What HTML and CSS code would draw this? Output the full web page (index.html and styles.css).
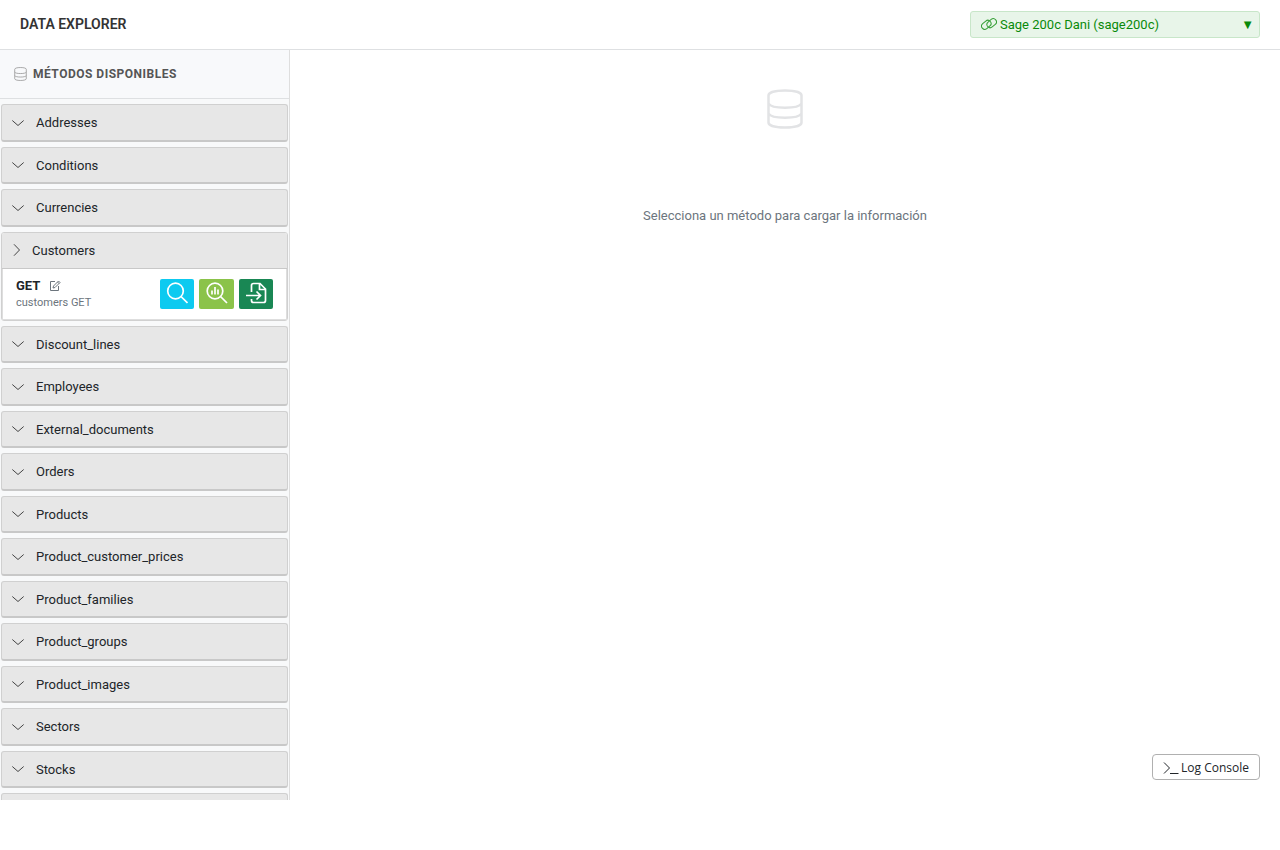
FILE: index.html
```html
<!DOCTYPE html>
<html lang="es">
<head>
<meta charset="utf-8">
<meta name="viewport" content="width=device-width, initial-scale=1">
<title>Data Explorer</title>
<link rel="stylesheet" href="styles.css">
</head>
<body>
<svg class="sprite" aria-hidden="true">
  <symbol id="db" viewBox="0 0 36 40"><path d="M1.500 6.500C1.500 3.500 8 1.500 18 1.500S34.500 3.500 34.500 6.500V33.500C34.500 36.500 28 38.500 18 38.500S1.500 36.500 1.500 33.500ZM1.500 14.500C3 17.300 9 18.700 18 18.700S33 17.300 34.500 14.500M1.500 24.500C3 27.300 9 28.700 18 28.700S33 27.300 34.500 24.500"/></symbol>
  <symbol id="down" viewBox="0 0 12 12"><path d="M.3 3.500 6 8.500 11.700 3.500"/></symbol>
  <symbol id="right" viewBox="0 0 12 12"><path d="M3 .3 8.500 6 3 11.700"/></symbol>
</svg>
<div class="app">
  <header class="topbar">
    <h1 class="topbar-title">DATA EXPLORER</h1>
    <div class="connection">
      <svg class="connection-icon" viewBox="0 0 16 14" aria-hidden="true"><rect x="-5.200" y="-3.200" width="10.400" height="6.400" rx="3.200" transform="translate(5.300 7.800) rotate(-40)"/><rect x="-5.200" y="-3.200" width="10.400" height="6.400" rx="3.200" transform="translate(10.700 6.200) rotate(-40)"/></svg>
      <select class="connection-select" aria-label="Conexión"><option>Sage 200c Dani (sage200c)</option></select>
      <span class="connection-arrow" aria-hidden="true">▼</span>
    </div>
  </header>
  <div class="body">
    <aside class="sidebar">
      <h2 class="sidebar-title"><svg class="sidebar-icon" aria-hidden="true"><use href="#db"/></svg>MÉTODOS DISPONIBLES</h2>
      <div class="methods">
        <button class="method" type="button"><svg class="chevron" aria-hidden="true"><use href="#down"/></svg>Addresses</button>
        <button class="method" type="button"><svg class="chevron" aria-hidden="true"><use href="#down"/></svg>Conditions</button>
        <button class="method" type="button"><svg class="chevron" aria-hidden="true"><use href="#down"/></svg>Currencies</button>
        <section class="group">
          <button class="method method-open" type="button" aria-expanded="true"><svg class="chevron" aria-hidden="true"><use href="#right"/></svg>Customers</button>
          <div class="endpoint">
            <div class="endpoint-info">
              <div class="endpoint-verb">GET
                <svg class="edit" viewBox="0 0 12 12" aria-hidden="true"><path d="M6 1.500H1.500V10.500H9.500V6M4 8 4.500 6 9.500 1 11 2.500 6 7.500ZM8.500 2 10 3.500"/></svg>
              </div>
              <div class="endpoint-path">customers GET</div>
            </div>
            <div class="actions">
              <button class="action action-view" type="button" aria-label="Ver"><svg class="action-icon" viewBox="0 0 22 22" aria-hidden="true"><circle cx="9.500" cy="9" r="7.800"/><path d="M15 14.500 21.500 21"/></svg></button>
              <button class="action action-analyze" type="button" aria-label="Analizar"><svg class="action-icon" viewBox="0 0 22 22" aria-hidden="true"><circle cx="9" cy="9" r="7.800"/><path d="M14.500 14.500 21 21M6 12.500V8.500M9 12.500V5M12 12.500V7.500"/></svg></button>
              <button class="action action-export" type="button" aria-label="Exportar"><svg class="action-icon" viewBox="0 0 22 22" aria-hidden="true"><path d="M6.500 10V3.500Q6.500 1.500 8.500 1.500H15L20.500 7V18.500Q20.500 20.500 18.500 20.500H8.500Q6.500 20.500 6.500 18.500V17M14.500 2V7.500H20M1 13.500H15.500M11.500 9.500 15.500 13.500 11.500 17.500"/></svg></button>
            </div>
          </div>
        </section>
        <button class="method" type="button"><svg class="chevron" aria-hidden="true"><use href="#down"/></svg>Discount_lines</button>
        <button class="method" type="button"><svg class="chevron" aria-hidden="true"><use href="#down"/></svg>Employees</button>
        <button class="method" type="button"><svg class="chevron" aria-hidden="true"><use href="#down"/></svg>External_documents</button>
        <button class="method" type="button"><svg class="chevron" aria-hidden="true"><use href="#down"/></svg>Orders</button>
        <button class="method" type="button"><svg class="chevron" aria-hidden="true"><use href="#down"/></svg>Products</button>
        <button class="method" type="button"><svg class="chevron" aria-hidden="true"><use href="#down"/></svg>Product_customer_prices</button>
        <button class="method" type="button"><svg class="chevron" aria-hidden="true"><use href="#down"/></svg>Product_families</button>
        <button class="method" type="button"><svg class="chevron" aria-hidden="true"><use href="#down"/></svg>Product_groups</button>
        <button class="method" type="button"><svg class="chevron" aria-hidden="true"><use href="#down"/></svg>Product_images</button>
        <button class="method" type="button"><svg class="chevron" aria-hidden="true"><use href="#down"/></svg>Sectors</button>
        <button class="method" type="button"><svg class="chevron" aria-hidden="true"><use href="#down"/></svg>Stocks</button>
        <button class="method" type="button" aria-label="Más métodos"><svg class="chevron" aria-hidden="true"><use href="#down"/></svg></button>
      </div>
    </aside>
    <main class="content">
      <svg class="empty-icon" aria-hidden="true"><use href="#db"/></svg>
      <p class="empty-text">Selecciona un método para cargar la información</p>
      <button class="console" type="button"><svg class="console-icon" viewBox="0 0 16 12" aria-hidden="true"><path d="M1 .5 6.500 6 1 11.500M7 11.500H15.500"/></svg>Log Console</button>
    </main>
  </div>
</div>
</body>
</html>
```
FILE: styles.css
```css
* { box-sizing: border-box; }
body {
  margin: 0;
  background: #fff;
  color: #212529;
  font: 13px/1.5 Roboto, "Liberation Sans", sans-serif;
}
button, select { font: inherit; color: inherit; }
svg { flex: none; fill: none; stroke: currentColor; }
.sprite { position: absolute; width: 0; height: 0; }
.app {
  display: flex;
  flex-direction: column;
  height: calc(100vh - 50px);
}
.topbar {
  display: flex;
  align-items: center;
  justify-content: space-between;
  flex: none;
  height: 50px;
  padding: 0 20px;
  border-bottom: 1px solid #dee0e2;
}
.topbar-title { margin: 0; font-size: 14px; font-weight: 600; color: #333; }
.connection { position: relative; width: 290px; color: #0a8a0a; }
.connection-select {
  display: block;
  width: 100%;
  height: 27px;
  padding: 0 29px;
  border: 1px solid #c8e6c9;
  border-radius: 3px;
  background: #e8f5e9;
  appearance: none;
}
.connection-icon {
  position: absolute;
  left: 11px;
  top: 6px;
  width: 16px;
  height: 14px;
  opacity: 0.8;
}
.connection-arrow { position: absolute; right: 6px; top: 4px; pointer-events: none; }
.body { display: flex; flex: 1; min-height: 0; }
.sidebar {
  display: flex;
  flex-direction: column;
  flex: none;
  width: 290px;
  border-right: 1px solid #dedede;
  background: #f8f9fa;
}
.sidebar-title {
  display: flex;
  align-items: center;
  gap: 6px;
  flex: none;
  height: 49px;
  margin: 0;
  padding: 0 14px 1px;
  border-bottom: 1px solid #dee0e2;
  background: #f8f9fb;
  color: #555;
  font-size: 12px;
  font-weight: 700;
  letter-spacing: 0.5px;
}
.sidebar-icon { width: 13px; height: 14px; color: #888; stroke-width: 2; }
.methods {
  display: flex;
  flex-direction: column;
  gap: 5px;
  flex: 1;
  min-height: 0;
  padding: 5px 1px 0;
  overflow: hidden;
}
.method {
  display: flex;
  align-items: center;
  gap: 12px;
  flex: none;
  width: 100%;
  padding: 8px 10px 7px;
  border: 1px solid #d0d0d0;
  border-bottom: 2px solid #c8c8c8;
  border-radius: 3px;
  background: #e7e7e7;
  text-align: left;
}
.chevron { width: 12px; height: 12px; color: #444; }
.group {
  flex: none;
  border: 1px solid #d0d0d0;
  border-radius: 3px;
  background: #fff;
}
.method-open {
  gap: 9px;
  padding: 8px 9px;
  border-width: 0 0 1px;
  border-radius: 2px 2px 0 0;
}
.endpoint {
  display: flex;
  align-items: center;
  justify-content: space-between;
  padding: 8px 13px 7px;
  border: 1px solid #dedede;
  border-top: 0;
}
.endpoint-verb { display: flex; align-items: center; gap: 9px; line-height: 18px; font-weight: 700; }
.edit { width: 12px; height: 12px; color: #6c757d; }
.endpoint-path { font-size: 11px; line-height: 1.5; color: #6c757d; }
.actions { display: flex; gap: 5px; }
.action {
  display: flex;
  justify-content: center;
  width: 34px;
  height: 30px;
  padding: 3px 0;
  border: 0;
  border-radius: 2px;
  color: #fff;
}
.action-icon { width: 22px; height: 22px; stroke-width: 1.7; }
.action-view { background: #0dcaf0; }
.action-analyze { width: 35px; background: #8bc34a; }
.action-export { background: #198754; }
.content {
  position: relative;
  display: flex;
  flex-direction: column;
  align-items: center;
  flex: 1;
  gap: 77px;
  padding-top: 39px;
}
.empty-icon { width: 36px; height: 40px; color: #e2e3e5; stroke-width: 2.5; }
.empty-text { margin: 0; color: #6c757d; }
.console {
  position: absolute;
  right: 20px;
  bottom: 20px;
  display: flex;
  align-items: center;
  gap: 2px;
  height: 26px;
  padding: 1px 10px 0;
  border: 1px solid #b0b0b0;
  border-radius: 4px;
  background: #fff;
  font: 500 12px/18px "Open Sans", "Noto Sans", sans-serif;
}
.console-icon { width: 16px; height: 12px; }
```
